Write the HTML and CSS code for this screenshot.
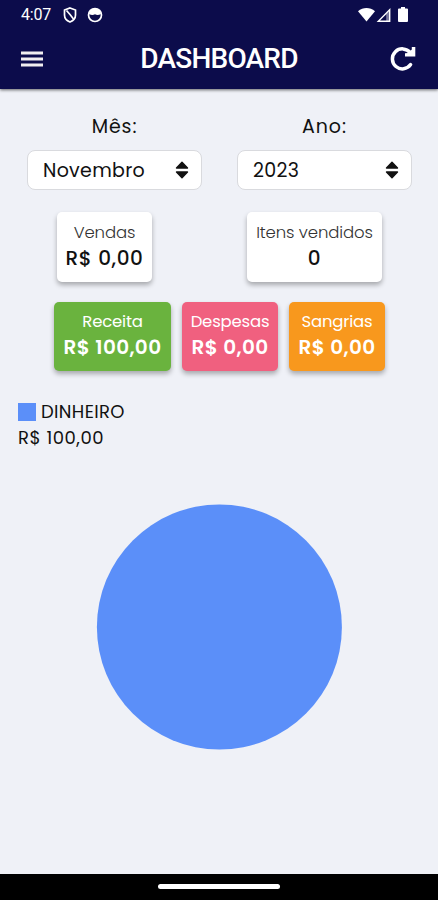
FILE: index.html
```html
<!DOCTYPE html>
<html lang="pt-BR">
<head>
    <meta charset="UTF-8">
    <meta name="viewport" content="width=device-width, initial-scale=1.0">
    <title>Dashboard</title>
    <link rel="stylesheet" href="styles.css">
</head>
<body>

    <header class="header">
        <!-- Status bar -->
        <div class="status-bar">
            <span class="clock">4:07</span>
            <svg class="status-shield" width="14" height="16" viewBox="0 0 14 16" fill="none" stroke="#fff" stroke-width="1.7">
                <path d="M7 1 L12.5 3 V8 C12.5 11.3 10 13.8 7 15 C4 13.8 1.5 11.3 1.5 8 V3 Z"/>
                <path d="M3.5 3.5 L7 7.5 L10.5 12"/>
            </svg>
            <svg class="status-face" width="16" height="16" viewBox="0 0 16 16">
                <circle cx="8" cy="8" r="6.5" fill="none" stroke="#fff" stroke-width="1.7"/>
                <path d="M2 7 C2.5 3 5 1.7 8 1.7 S13.5 3 14 7 C11.5 8.4 9.5 8.2 8 7.2 C6.4 8.2 4.5 8.4 2 7 Z" fill="#fff"/>
            </svg>
            <svg class="status-signal" width="52" height="16" viewBox="0 0 52 16" fill="#fff">
                <path d="M0 4.3 C5 -.1 12 -.1 17 4.3 L8.5 14.5 Z"/>
                <path d="M31.7 2.8 V14.2 H20.3 Z" fill="none" stroke="#fff" stroke-width="1.4"/>
                <path d="M28.2 7 V14 H31.5 V4 Z" opacity=".45"/>
                <path d="M43 1.5 V0 H47 V1.5 H49 Q50 1.5 50 2.5 V14 Q50 15 49 15 H41 Q40 15 40 14 V2.5 Q40 1.5 41 1.5 Z"/>
            </svg>
        </div>

        <!-- Top bar -->
        <div class="top-bar">
            <button class="icon-button" aria-label="Menu">
                <svg width="22" height="16" viewBox="0 0 22 16" fill="#f1eef0">
                    <path d="M0 .5 H22 V3.5 H0 Z M0 6.5 H22 V9.5 H0 Z M0 12.5 H22 V15.5 H0 Z"/>
                </svg>
            </button>
            <h1>DASHBOARD</h1>
            <button class="icon-button" aria-label="Atualizar">
                <svg width="26" height="26" viewBox="0 0 26 26" fill="none" stroke="#fff" stroke-width="3.5">
                    <path d="M20.6 18.6 A10 10 0 1 1 20.2 6.6" stroke-linecap="round"/>
                    <path d="M25.3 1 V10.5 H15 V7.3 L18 7 L21.8 3.5 V1 Z" fill="#fff" stroke="none"/>
                </svg>
            </button>
        </div>
    </header>

    <main class="content">
        <!-- Filters -->
        <form class="filters">
            <div class="form-group">
                <label class="label-month" for="month">Mês:</label>
                <div class="select-box">
                    <select class="select-month" id="month">
                        <option>Novembro</option>
                    </select>
                    <svg class="select-arrows" width="14" height="18" viewBox="0 0 14 18">
                        <path d="M7 1.2 L12.5 7 H1.5 Z M7 16.8 L12.5 11 H1.5 Z" fill="#111" stroke="#111" stroke-width="1.4" stroke-linejoin="round"/>
                    </svg>
                </div>
            </div>
            <div class="form-group">
                <label class="label-year" for="year">Ano:</label>
                <div class="select-box">
                    <select class="select-year" id="year">
                        <option>2023</option>
                    </select>
                    <svg class="select-arrows" width="14" height="18" viewBox="0 0 14 18">
                        <path d="M7 1.2 L12.5 7 H1.5 Z M7 16.8 L12.5 11 H1.5 Z" fill="#111" stroke="#111" stroke-width="1.4" stroke-linejoin="round"/>
                    </svg>
                </div>
            </div>
        </form>

        <!-- Sales -->
        <div class="cards cards-sales">
            <div class="card card-vendas">
                <span class="card-title">Vendas</span>
                <strong class="card-value">R$ 0,00</strong>
            </div>
            <div class="card card-itens">
                <span class="card-title">Itens vendidos</span>
                <strong class="card-value">0</strong>
            </div>
        </div>

        <!-- Cash flow -->
        <div class="cards cards-cash">
            <div class="card card-receita">
                <span class="card-title">Receita</span>
                <strong class="card-value">R$ 100,00</strong>
            </div>
            <div class="card card-despesas">
                <span class="card-title">Despesas</span>
                <strong class="card-value">R$ 0,00</strong>
            </div>
            <div class="card card-sangrias">
                <span class="card-title">Sangrias</span>
                <strong class="card-value">R$ 0,00</strong>
            </div>
        </div>

        <!-- Payment chart -->
        <div class="legend">
            <div class="legend-item">
                <span class="legend-color"></span>
                <span class="legend-name">DINHEIRO</span>
            </div>
            <div class="legend-value">R$ 100,00</div>
        </div>
        <svg class="chart" width="246" height="246" viewBox="0 0 246 246">
            <circle cx="123.4" cy="123" r="122.5" fill="#5b8ff9"/>
        </svg>
    </main>

    <footer class="nav-bar">
        <div class="nav-handle"></div>
    </footer>

</body>
</html>
```
FILE: styles.css
```css
* {
    margin: 0;
    padding: 0;
    box-sizing: border-box;
}

body {
    display: flex;
    flex-direction: column;
    height: 900px;
    overflow: hidden;
    background-color: #eff1f7;
    color: #111;
    font-family: Poppins, Inter, sans-serif;
    font-feature-settings: "cv11";
}

.header {
    height: 89px;
    background-color: #0c0c4b;
    color: white;
    font-family: Roboto, sans-serif;
    box-shadow: 0 1px 3px rgba(0, 0, 0, 0.6);
}

.status-bar {
    display: flex;
    align-items: center;
    height: 29px;
    padding: 0 28px 0 21px;
}

.clock {
    width: 42px;
    font-size: 16px;
    line-height: 28px;
    letter-spacing: -0.2px;
}

.status-face {
    margin-left: 10px;
}

.status-signal {
    margin-left: auto;
}

.top-bar {
    display: flex;
    align-items: center;
    justify-content: space-between;
    height: 59px;
    padding: 0 22px 0 21px;
}

.icon-button {
    display: flex;
    width: 26px;
    border: none;
    background: none;
}

h1 {
    padding-left: 1px;
    font-size: 28px;
    font-weight: 500;
    letter-spacing: -0.8px;
}

.content {
    flex: 1;
}

.filters {
    display: flex;
    justify-content: space-between;
    padding: 23px 26px 0 27px;
}

.form-group {
    width: 175px;
}

label {
    display: block;
    height: 30px;
    margin-bottom: 8px;
    font-size: 19px;
    line-height: 30px;
    text-align: center;
}

.label-month {
    letter-spacing: 0.9px;
}

.label-year {
    letter-spacing: 1px;
}

.select-box {
    display: flex;
    align-items: center;
    height: 40px;
    padding: 0 12px 0 15px;
    border: 1px solid #d9dade;
    border-radius: 8px;
    background-color: white;
}

select {
    flex: 1;
    appearance: none;
    border: none;
    background: none;
    color: #111;
    font: inherit;
    font-size: 19px;
}

.select-month {
    letter-spacing: 0.3px;
}

.select-year {
    letter-spacing: 0.3px;
}

.cards {
    display: flex;
}

.cards-sales {
    gap: 95px;
    padding: 22px 0 0 57px;
}

.cards-cash {
    gap: 11px;
    padding: 20px 0 0 54px;
}

.card {
    display: flex;
    flex-direction: column;
    align-items: center;
    height: 70px;
    padding-top: 9px;
    border-radius: 5px;
    background-color: white;
    box-shadow: 0 3px 5px rgba(0, 0, 0, 0.3);
    white-space: nowrap;
}

.card-title {
    color: #333;
    font-size: 16.5px;
    font-weight: 300;
    line-height: 24px;
    letter-spacing: -0.1px;
}

.card-value {
    font-size: 20px;
    font-weight: 500;
    line-height: 26px;
    letter-spacing: 0.6px;
}

.cards-cash .card {
    height: 69px;
    padding-top: 8px;
}

.cards-cash .card-title {
    color: white;
    font-weight: 400;
    letter-spacing: -0.2px;
}

.cards-cash .card-value {
    color: white;
    font-weight: 600;
    letter-spacing: 0.35px;
}

.card-vendas {
    width: 95px;
}

.card-itens {
    width: 135px;
}

.card-receita {
    width: 117px;
    background-color: #6ab33e;
}

.card-despesas {
    width: 96px;
    background-color: #f0607f;
}

.card-sangrias {
    width: 96px;
    background-color: #f8981d;
}

.legend {
    padding: 28px 18px 0;
    font-size: 18px;
    line-height: 26px;
}

.legend-item {
    display: flex;
    align-items: center;
    gap: 5px;
}

.legend-name {
    letter-spacing: 0.35px;
}

.legend-value {
    letter-spacing: 0.5px;
}

.legend-color {
    width: 18px;
    height: 18px;
    background-color: #5b8ff9;
}

.chart {
    display: block;
    margin: 53px auto 0 96px;
}

.nav-bar {
    display: flex;
    justify-content: center;
    height: 26px;
    padding-top: 10px;
    background-color: black;
}

.nav-handle {
    width: 122px;
    height: 5px;
    border-radius: 3px;
    background-color: white;
}
```
